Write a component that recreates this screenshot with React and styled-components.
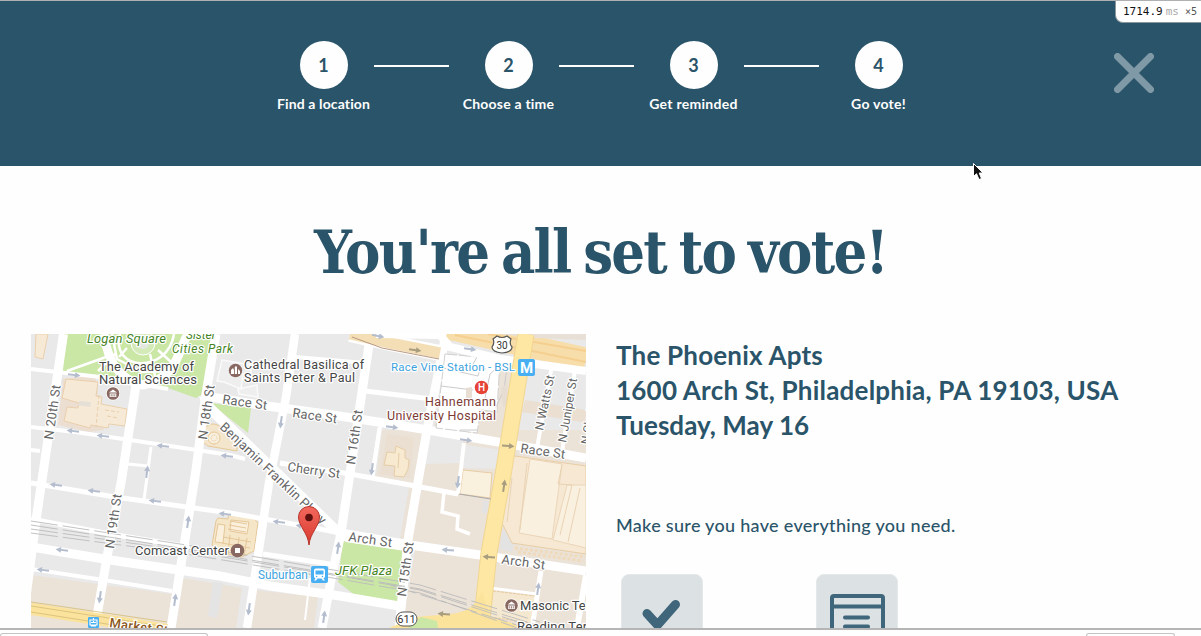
import React from "react";
import styled, { createGlobalStyle } from "styled-components";

const navy = "#2a5469";

const GlobalStyle = createGlobalStyle`
  * { box-sizing: border-box; }
  body { margin: 0; background: #fefefe; overflow: hidden; }
`;

const Page = styled.div`
  position: relative;
  display: flex;
  flex-direction: column;
  width: 1201px;
  height: 636px;
  overflow: hidden;
  color: ${navy};
  background: #fefefe;
  font-family: Lato, "Open Sans", sans-serif;
`;

const Header = styled.header`
  display: flex;
  flex: none;
  align-items: flex-start;
  justify-content: space-between;
  height: 166px;
  padding: 40px 47px 0 274px;
  border-top: 1px solid #aeb0b2;
  background: ${navy};
`;

const Steps = styled.ol`
  display: flex;
  margin: 0;
  padding: 0;
  list-style: none;
`;

const Step = styled.li`
  display: flex;
  flex-direction: column;
  align-items: center;
  width: 100px;
`;

const StepNumber = styled.span`
  display: grid;
  place-items: center;
  width: 48px;
  height: 48px;
  padding-right: 1px;
  border-radius: 50%;
  background: #fefefe;
  color: ${navy};
  font-size: 18px;
  font-weight: 700;
  line-height: 1;
`;

const StepLabel = styled.span`
  margin: 6px 1px 0 0;
  color: #fefefe;
  font-size: 14px;
  font-weight: 700;
  line-height: 18px;
  letter-spacing: ${(p) => p.$track}px;
  white-space: nowrap;
`;

const Connector = styled.li`
  width: 75px;
  height: 2px;
  margin: 24px 10px 0 0;
  background: #fefefe;
`;

const CloseButton = styled.button`
  display: block;
  width: 40px;
  height: 40px;
  margin-top: 12px;
  padding: 0;
  border: 0;
  background: none;
  svg { display: block; }
`;

const Timer = styled.div`
  position: absolute;
  top: 1px;
  right: 0;
  display: flex;
  align-items: baseline;
  width: 86px;
  height: 22px;
  padding: 3px 0 0 7px;
  border: 1px solid #8b979d;
  border-width: 0 0 1px 1px;
  border-bottom-left-radius: 8px;
  background: #fff;
  color: #111;
  font: 11px/15px "DejaVu Sans Mono", monospace;
`;

const Unit = styled.span`
  margin-left: 3px;
  color: #aaa;
`;

const Count = styled.span`
  margin-left: 6px;
  color: #555;
  font-size: 10px;
`;

const Cursor = styled.svg`
  position: absolute;
  left: 972px;
  top: 162px;
`;

const Title = styled.h1`
  flex: none;
  height: 168px;
  margin: 0;
  padding-top: 51px;
  font-family: "DejaVu Serif Condensed", "DejaVu Serif", serif;
  font-stretch: condensed;
  font-size: 59px;
  font-weight: 700;
  line-height: 72px;
  letter-spacing: -1.75px;
  word-spacing: -4px;
  text-align: center;
  white-space: nowrap;
`;

const Content = styled.main`
  display: flex;
  flex: none;
  gap: 30px;
  height: 294px;
  padding-left: 31px;
  overflow: hidden;
`;

const MapView = styled.svg`
  display: block;
  flex: none;
  width: 555px;
  height: 294px;
  background: #e9e9e9;
  font-family: Roboto, sans-serif;
`;

const Details = styled.section`
  display: flex;
  flex-direction: column;
  width: 570px;
`;

const Address = styled.div`
  padding-top: 4px;
  font-size: 26px;
  font-weight: 700;
  line-height: 35px;
`;

const AddressLine = styled.div`
  letter-spacing: ${(p) => p.$track}px;
  white-space: nowrap;
`;

const Reminder = styled.p`
  margin: 69px 0 0;
  font-size: 18px;
  font-weight: 500;
  line-height: 26px;
  letter-spacing: 0.3px;
`;

const Checklist = styled.div`
  display: flex;
  gap: 113px;
  margin: 36px 0 0 5px;
`;

const Tile = styled.div`
  width: 82px;
  height: 82px;
  flex: none;
  border: 1px solid #e4e8e9;
  border-radius: 8px;
  background: #dce1e3;
  svg { display: block; }
`;

const Footer = styled.footer`
  display: flex;
  flex: none;
  align-items: flex-end;
  justify-content: space-between;
  height: 8px;
  padding-right: 26px;
  border-top: 2px solid #b5b5b5;
  background: #fefefe;
`;

const FooterTab = styled.div`
  width: ${(p) => p.$width}px;
  height: 3px;
  border: 1px solid #c4c4c4;
  border-bottom: 0;
  border-radius: 4px 4px 0 0;
`;

const Street = styled.polyline`
  fill: none;
  stroke: ${(p) => p.$color || "#fff"};
  stroke-width: ${(p) => p.$w || 9};
`;

const MapText = styled.text`
  font-size: ${(p) => p.$size || 13}px;
  font-style: ${(p) => (p.$italic ? "italic" : "normal")};
  font-weight: ${(p) => p.$weight || 400};
  fill: ${(p) => p.$color || "#444"};
  stroke: #fff;
  stroke-width: 2.4;
  stroke-linejoin: round;
  paint-order: stroke;
`;

const steps = [
  ["Find a location", 0.12],
  ["Choose a time", 0.2],
  ["Get reminded", 0.28],
  ["Go vote!", 0.25],
];

const streets = [
  ["63.5,334 42,480 36,520 22,628", 9],
  ["136,385 121.5,480 107,557 96,622", 9],
  ["216,334 205,400 196,470 171,628", 9],
  ["295,334 286,397 269,483 247,628", 8.5],
  ["370,338 349,480 341,533 332,575 322,628", 9],
  ["446,334 427,430 420,470 408,540 399,628", 9],
  ["31,369 100,377 168,389", 4],
  ["205,396 260,405 333,415 410,427 510,444 586,458", 9],
  ["31,427 75,432 130,440 230,455 245,459", 4],
  ["31,450 40,451", 4],
  ["280,463 350,474 410,485 458,494", 5],
  ["31,483 115,497 230,513 310,527 345,534", 5],
  ["31,519 110,534 190,547", 5],
  ["263,554 330,564", 5],
  ["341,533 410,545 480,555 586,571", 9],
  ["31,547 110,560 220,576 270,586 340,596 405,607", 9],
  ["31,569 110,581 172,591", 4],
  ["151,447 144,500", 3],
  ["128,464 148,466", 3],
  ["380,427 372,480", 4],
  ["365,391 440,400", 5],
  ["295,357 365,363", 4],
  ["379,428 371,480", 3],
  ["464,443 458,494", 4],
  ["552,365 537,448", 4],
  ["575,370 562,452", 4],
  ["541,571 532,628", 5],
  ["490,588 537,594", 3],
  ["586,575 577,628", 6],
  ["444,493 442,512 458,516 457,529 470,534", 3.5],
  ["310,578 305,620", 2],
];

const arrows = [
  [74, 375, 7], [73, 431, 187], [103, 436, 187], [163, 446, 187], [227, 456, 187],
  [147, 472, 277], [56, 485, 187], [94, 491, 187], [155, 501, 187], [225, 514, 187],
  [62, 550, 187], [43, 570, 187], [188, 522, -82], [175, 600, -82], [100, 597, 98],
  [281, 422, 98], [372, 469, 98], [392, 427, 8], [466, 440, 8], [470, 349, 8],
  [279, 522, 187], [302, 526, 187], [338, 548, -82], [249, 609, 98], [324, 617, -82],
  [448, 550, 185], [458, 482, 98], [538, 589, -82], [378, 336, 12],
];

const roadArrows = [[415, 350, 8], [508, 446, 5], [504, 486, -82], [489, 557, 185], [444, 614, 185]];

const Arrow = ({ at: [x, y, angle], color }) => (
  <path
    d="M-6-1H1V-3L6.5 0L1 3V1H-6Z"
    fill={color}
    transform={`translate(${x} ${y}) rotate(${angle})`}
  />
);

const Museum = ({ x, y }) => (
  <g transform={`translate(${x} ${y})`}>
    <circle r="7" fill="#fff" />
    <circle r="6.3" fill="#886860" />
    <path d="M-4-1L0-4L4-1ZM-3.3 0H3.3V3.5H-3.3Z" fill="#fff" />
    <path d="M-1.8 .7V3M0 .7V3M1.8 .7V3" stroke="#886860" strokeWidth=".8" />
  </g>
);

const CityMap = () => (
  <MapView viewBox="31 334 555 294" aria-label="Map of polling place">
    <path d="M31 575L172 594L169 628H31ZM182 578L242 588L236 628H176ZM255 590L318 597L314 628H249Z" fill="#ebe2d8" />
    <path d="M382 430H586V628H402L416 545L400 538L409 487L376 478Z" fill="#ebe2d8" />
    <path d="M450 355L518 365L510 437L434 426Z" fill="#ebe2d8" />
    <path d="M525 400L586 410V423L522 412Z" fill="#ebdfd1" />
    <path d="M466 445L502 450L500 469L463 468ZM427 432L463 439L461 463L424 464Z" fill="#e9e9e9" />
    <path d="M391 487L408 489L400 538L384 534Z" fill="#e9e9e9" />
    <path d="M483 501H489L487 513H482ZM502 530L515 532L512 552L500 549Z" fill="#e3e3e3" />
    <path d="M213 582L223 583L217 618L208 616Z" fill="#e4e4e4" />
    <path d="M63 379L95 375L104 430L88 432L58 425Z" fill="#ecdfd2" />
    <path d="M65 334H218L206 392L196 398L168 388L63 371Z" fill="#cae7a5" />
    <path d="M210 403L251 408L248 433Z" fill="#cae7a5" />
    <path d="M343 539L404 547L397 603L356 596L338 582Z" fill="#cae7a5" />
    <path d="M112 334L117 359L142 372L175 371M120 334C110 372 168 374 174 334M67 371L106 357M116 353L98 371M150 354L155 376M127 348L119 357M158 350L171 362M123 340H108" fill="none" stroke="#fff" strokeWidth="2.5" />
    <path d="M104 334C108 365 123 381 143 385C178 379 179 347 188 334" fill="none" stroke="#fff" strokeWidth="9" />
    <circle cx="143" cy="343" r="12" fill="#d5eab9" stroke="#fff" />
    <circle cx="143" cy="343" r="6" fill="#e3e8e0" />
    <path d="M36 334H48L43 359L35 357ZM66 379L98 382L96 396L102 397L101 404L127 409L125 426L109 424L108 428L91 425L90 428L64 421L67 407L78 408L79 403L62 398Z" fill="#f6ead7" stroke="#ebcfac" strokeWidth="1" />
    <path d="M79 401L91 402L90 407L78 405Z" fill="#e5dfd8" />
    <path d="M99 395L96 427M105 410L119 412M107 416L118 418" stroke="#ebcfac" fill="none" strokeDasharray="4 2" />
    <path d="M206 427C212 420 226 426 228 438L237 443V451L208 446C199 441 200 432 206 427Z" fill="#f4e5cd" stroke="#e7c995" />
    <circle cx="214" cy="438" r="6" fill="#f9efdf" stroke="#e7c995" />
    <circle cx="214" cy="438" r="3" fill="none" stroke="#e7c995" strokeDasharray="1 1" />
    <path d="M218 518L228 519L229 512L252 516L258 523L254 551L242 557L219 552L212 545L216 521Z" fill="#f5e6c8" stroke="#e5c798" />
    <path d="M218 524L225 525L223 543L215 542ZM231 520L249 522L247 534L230 531Z" fill="#faf0dc" stroke="#e5c798" />
    <path d="M230 521L247 524M229 525L246 528M228 529L246 532M223 537L251 542M222 543L250 548M230 535L228 554M239 537L237 556M247 538L244 556" stroke="#e5c798" />
    <path d="M387 434L414 438L410 478L380 474Z" fill="#ebdfd1" />
    <path d="M387 452L395 453L396 446L405 450V458L409 460L408 469L404 477L394 476L395 466L384 465Z" fill="#f7ead1" stroke="#e6cda6" />
    <path d="M463 470L492 473L490 498L460 494Z" fill="#faf0de" stroke="#e8cda4" />
    <path d="M399 453L398 468" stroke="#e6cda6" />
    <path d="M515 456L586 466V554L512 543L501 521L510 458Z" fill="#f6e8d3" stroke="#e8cda4" />
    <path d="M530 459L562 464L552 539L519 533ZM567 485H586V548L553 540Z" fill="#f9f0e0" stroke="#ebd5b8" />
    <path d="M527 463L520 530M562 465L558 484L572 485L560 535M580 488L568 542M512 478L507 522" fill="none" stroke="#ead2b3" />
    <path d="M515 548L585 557M518 552L583 561" fill="none" stroke="#efdabb" strokeWidth="3" strokeDasharray="3 2" />
    <path d="M493 591L535 596L531 623L490 617Z" fill="#f5e8d1" stroke="#e7c99b" strokeDasharray="3 1" />
    {streets.map(([points, w]) => <Street key={points} points={points} $w={w} />)}
    <path d="M199 396L211 402L347 534L405 543V551L346 542L331 532L204 410Z" fill="#fff" />
    <path d="M445 354L500 359L497 412L481 410L477 433L436 428Z" fill="#fff" stroke="#d1d1d1" strokeDasharray="12 2" />
    <path d="M443 368L478 376L480 369H486M441 386L473 390M472 366L477 357M460 430H477M440 402L453 404M490 374L484 403L496 407L504 390L507 367H498Z" fill="none" stroke="#cbcbcb" />
    <path d="M501 388L507 383L508 404L503 407ZM466 388L472 387V401H466Z" fill="#e7ddd3" />
    <path d="M222 360L251 365V373L243 374L241 389L224 382L217 381ZM238 389L257 385L258 397L239 394Z" fill="#eeeeee" stroke="#fafafa" strokeWidth="1.5" />
    <Street points="350,334 390,343 440,353" $w={16} $color="#fff" />
    <Street points="350,334 390,343 440,353" $w={11} $color="#f4deb5" />
    <path d="M352 337L382 348L439 359" fill="none" stroke="#b99b86" />
    <Street points="448,328 586,359" $w={23} $color="#f7dda9" />
    <path d="M455 335L586 362M488 334L586 351" stroke="#f5cf8f" strokeWidth="2" />
    <path d="M497 334H586V340L537 338Z" fill="#e8dfd6" />
    <path d="M376 334L440 335L450 347L500 359L586 371" fill="none" stroke="#fff" strokeWidth="8" />
    <Street points="526,334 503,475 489,553 482,618" $w={17} $color="#f1d692" />
    <Street points="526,334 503,475 489,553 482,618" $w={15} $color="#fde7a3" />
    <path d="M389 628L415 617L450 614Q475 612 482 591L490 617L530 628Z" fill="#fce39c" />
    <path d="M408 628L421 617L437 621L438 628Z" fill="#cae7a5" />
    <Street points="31,609 90,618 167,630" $w={12} $color="#fbe39d" />
    <path d="M31 602L167 622M31 606L167 627M31 612L145 630" fill="none" stroke="#d3bd76" strokeWidth=".8" />
    {[521, 525].map((y) => (
      <path key={y} d={`M31 ${y}L180 ${y + 23}L345 ${y + 51}L420 ${y + 64}L540 ${y + 101}`} fill="none" stroke="#bbb" strokeWidth=".9" strokeDasharray="27 5" />
    ))}
    <path d="M31 529L180 550L345 577L420 590L540 629M31 533L180 553L345 580L420 593L520 629M390 585L520 626" fill="none" stroke="#bbb" strokeWidth=".9" strokeDasharray="27 5" />
    <path d="M459 494L491 499" stroke="#aaa" />
    {arrows.map((at) => <Arrow key={at.join()} at={at} color="#b4bdce" />)}
    {roadArrows.map((at) => <Arrow key={at.join()} at={at} color="#a99d80" />)}

    <MapText x="87" y="342.5" $italic $color="#45841f" textLength="79">Logan Square</MapText>
    <MapText x="186" y="339" $italic $size={12} $color="#45841f">Sister</MapText>
    <MapText x="172" y="352.5" $italic $size={12} $color="#45841f" textLength="61">Cities Park</MapText>
    <MapText x="99" y="370.5" textLength="95">The Academy of</MapText>
    <MapText x="99" y="383.5" textLength="98">Natural Sciences</MapText>
    <MapText x="244" y="368.5" $size={12.5} textLength="120">Cathedral Basilica of</MapText>
    <MapText x="244" y="381.5" $size={12.5} textLength="111">Saints Peter &amp; Paul</MapText>
    <MapText x="391" y="371" $size={11.5} $color="#3ba2dd" textLength="124">Race Vine Station - BSL</MapText>
    <MapText x="425" y="406" $color="#7c3a34" $size={12.5} textLength="71">Hahnemann</MapText>
    <MapText x="387" y="419.5" $color="#7c3a34" $size={12.5} textLength="109">University Hospital</MapText>
    <MapText x="135" y="554.5" textLength="94">Comcast Center</MapText>
    <MapText x="258" y="579" $size={12} $color="#3ba2dd" textLength="50">Suburban</MapText>
    <MapText x="335" y="574.5" $italic $color="#45841f" textLength="57">JFK Plaza</MapText>
    <MapText x="520" y="609.5" $size={13} textLength="94">Masonic Temple</MapText>
    <MapText x="517" y="631" $size={13} textLength="103">Reading Terminal</MapText>
    <MapText $color="#666" $size={13} transform="translate(222 403.5) rotate(8)" textLength="45">Race St</MapText>
    <MapText $color="#666" $size={13} transform="translate(292 417) rotate(8)" textLength="45">Race St</MapText>
    <MapText $color="#666" $size={13} transform="translate(520 452.5) rotate(8)" textLength="45">Race St</MapText>
    <MapText $color="#666" $size={13} transform="translate(287 471) rotate(8)" textLength="53">Cherry St</MapText>
    <MapText $color="#666" $size={13} transform="translate(348 541) rotate(8)" textLength="44">Arch St</MapText>
    <MapText $color="#666" $size={13} transform="translate(501 563.5) rotate(8)" textLength="44">Arch St</MapText>
    <MapText $color="#666" $size={13} transform="translate(219 428) rotate(43.5)" textLength="141">Benjamin Franklin Pkwy</MapText>
    <MapText $color="#666" transform="translate(53 440) rotate(-82)" textLength="55">N 20th St</MapText>
    <MapText $color="#666" transform="translate(114 549) rotate(-82)" textLength="55">N 19th St</MapText>
    <MapText $color="#666" transform="translate(207 440) rotate(-82)" textLength="55">N 18th St</MapText>
    <MapText $color="#666" transform="translate(355 465) rotate(-82)" textLength="55">N 16th St</MapText>
    <MapText $color="#666" transform="translate(406 597) rotate(-82)" textLength="55">N 15th St</MapText>
    <MapText $color="#666" $size={12} transform="translate(543 431) rotate(-78)" textLength="56">N Watts St</MapText>
    <MapText $color="#666" $size={12} transform="translate(566 443) rotate(-80)" textLength="65">N Juniper St</MapText>
    <MapText $color="#666" $size={12} transform="translate(589 445) rotate(-80)">N Clarion St</MapText>
    <MapText $color="#8b5722" $weight={500} transform="translate(109 627) rotate(8)" textLength="59">Market St</MapText>

    <Museum x={113} y={393.5} />
    <Museum x={511.5} y={605.5} />
    <circle cx="235.5" cy="370.5" r="6.7" fill="#886860" />
    <path d="M231 374V370L233 368L234 370V374ZM234.8 374V367L236 366L237 367V374ZM238 374V369L240 371V374Z" fill="#fff" />
    <circle cx="237.5" cy="550.5" r="6.8" fill="#886860" />
    <rect x="235" y="548" width="5" height="5" fill="#fff" />
    <circle cx="481.5" cy="387.5" r="6.8" fill="#e64335" />
    <text x="481.5" y="391.2" textAnchor="middle" fontSize="10" fontWeight="500" fill="#fff">H</text>
    <rect x="518" y="359" width="17" height="17" rx="2" fill="#49aff3" />
    <text x="526.5" y="372.8" textAnchor="middle" fontSize="15" fontWeight="700" fill="#fff">M</text>
    <rect x="311" y="566" width="17" height="17" rx="2" fill="#49aff3" />
    <path d="M316 568.500H323Q325 568.500 325 570.500V577L323.500 578.500L325 580.500H323L321.500 578.500H317.500L316 580.500H314L315.500 578.500L314 577V570.500Q314 568.500 316 568.500Z" fill="#fff" />
    <path d="M315.500 570.500H323.500V574.500H315.500Z" fill="#49aff3" />
    <circle cx="316.600" cy="576.500" r=".8" fill="#49aff3" />
    <circle cx="322.400" cy="576.500" r=".8" fill="#49aff3" />
    <rect x="88" y="617" width="11" height="11" rx="1" fill="#49aff3" />
    <path d="M90 620H97V625H90ZM93.5 618V620M91 626H96M93.5 621V623M91 622.5H96" fill="none" stroke="#fff" strokeWidth="1.1" />
    <path d="M493 339L497 336Q502 339 507 336L511 339Q509 344 512 347Q512 352 502 353Q492 352 492 347Q495 343 493 339Z" fill="#fff" stroke="#555" strokeWidth="1.2" />
    <text x="502" y="348.500" textAnchor="middle" fontSize="10" fill="#333">30</text>
    <rect x="396" y="612" width="21" height="14" rx="7" fill="#fff" stroke="#555" />
    <text x="406.5" y="623" textAnchor="middle" fontSize="11" fill="#333">611</text>
    <defs>
      <linearGradient id="pin" x1="0" x2="0" y1="0" y2="1">
        <stop offset="0" stopColor="#f3685d" />
        <stop offset="1" stopColor="#d9392e" />
      </linearGradient>
    </defs>
    <path d="M309 545C308 533 298.500 526 298.500 517A10.500 10.500 0 0 1 319.500 517C319.500 526 310 533 309 545Z" fill="url(#pin)" stroke="#b6352c" />
    <circle cx="309" cy="517.500" r="3.800" fill="#5d100d" />
  </MapView>
);

export default function App() {
  return (
    <Page>
      <GlobalStyle />
      <Header>
        <Steps>
          {steps.map(([label, track], i) => (
            <React.Fragment key={label}>
              <Step>
                <StepNumber>{i + 1}</StepNumber>
                <StepLabel $track={track}>{label}</StepLabel>
              </Step>
              {i < steps.length - 1 && <Connector aria-hidden="true" />}
            </React.Fragment>
          ))}
        </Steps>
        <CloseButton aria-label="Close">
          <svg width="40" height="40" viewBox="0 0 40 40">
            <path d="M3.500 3.500L36.500 36.500M36.500 3.500L3.500 36.500" stroke="#8099a6" strokeWidth="7" strokeLinecap="round" />
          </svg>
        </CloseButton>
      </Header>
      <Title>You're all set to vote!</Title>
      <Content>
        <CityMap />
        <Details>
          <Address>
            <AddressLine $track={0.2}>The Phoenix Apts</AddressLine>
            <AddressLine $track={0.22}>1600 Arch St, Philadelphia, PA 19103, USA</AddressLine>
            <AddressLine $track={0.05}>Tuesday, May 16</AddressLine>
          </Address>
          <Reminder>Make sure you have everything you need.</Reminder>
          <Checklist>
            <Tile>
              <svg width="80" height="80" viewBox="0 0 80 80">
                <path d="M25 38.500L35.500 50L53.500 29.500" fill="none" stroke="#3f667a" strokeWidth="9" strokeLinecap="round" />
              </svg>
            </Tile>
            <Tile>
              <svg width="80" height="80" viewBox="0 0 80 80">
                <path d="M15 80V23Q15 21 17 21H64Q66 21 66 23V80M15 31.500H66" fill="none" stroke="#3f667a" strokeWidth="4" />
                <path d="M28 42.500H51M28 51.500H51" stroke="#3f667a" strokeWidth="4" strokeLinecap="round" />
              </svg>
            </Tile>
          </Checklist>
        </Details>
      </Content>
      <Footer>
        <FooterTab $width={208} />
        <FooterTab $width={89} />
      </Footer>
      <Timer>1714.9<Unit>ms</Unit><Count>×5</Count></Timer>
      <Cursor width="14" height="20" viewBox="0 0 14 20">
        <path d="M1.500 1.500V14.500L4.500 11.700L7 17.500L9.500 16.500L7.200 11H11Z" fill="#111" stroke="#fff" strokeWidth="1" />
      </Cursor>
    </Page>
  );
}
